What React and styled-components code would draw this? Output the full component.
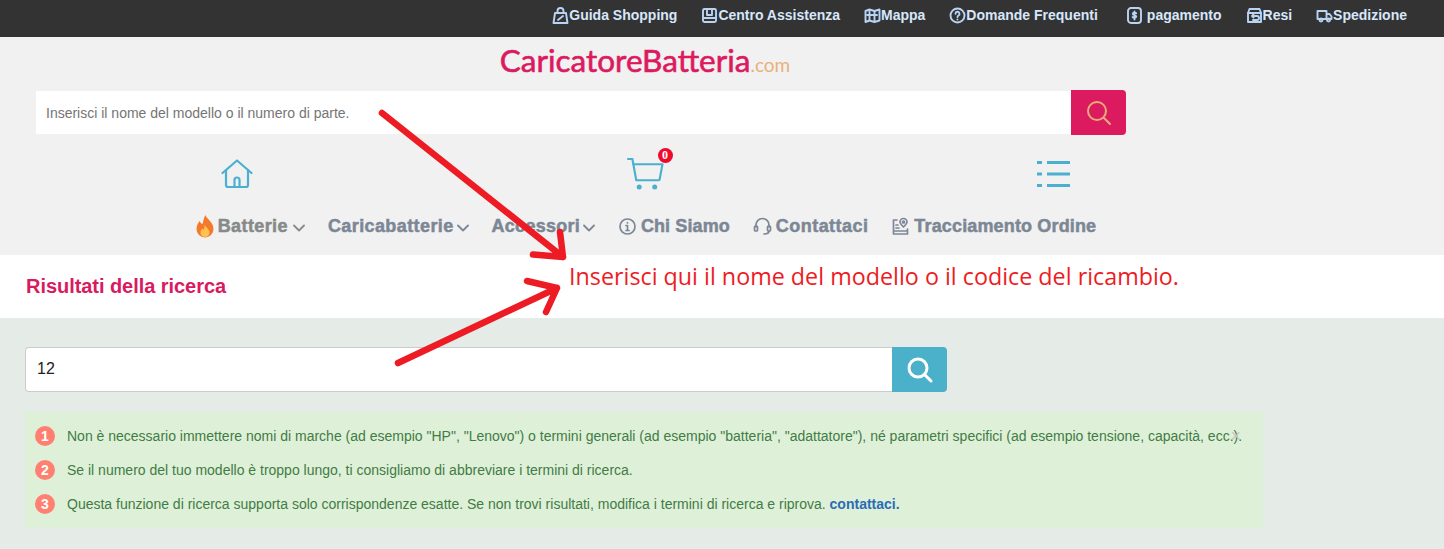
import React from "react";
import styled, { createGlobalStyle } from "styled-components";

const GlobalStyle = createGlobalStyle`
  html, body { margin: 0; padding: 0; }
  body { font-family: "Liberation Sans", Arial, sans-serif; background: #e5ebe7; overflow: hidden; }
  * { box-sizing: border-box; }
`;

const Page = styled.div`
  position: relative;
  width: 1444px;
  height: 549px;
  overflow: hidden;
`;

const TopBar = styled.div`
  height: 37px;
  background: #333;
  display: flex;
  justify-content: flex-end;
  align-items: center;
  padding: 0 37px 7px 0;
  gap: 24px;
`;

const TopLink = styled.a`
  display: flex;
  align-items: center;
  gap: ${(p) => p.$gap || 0}px;
  margin-left: ${(p) => p.$offset || 0}px;
  color: #d7e7fb;
  font-size: 14px;
  font-weight: bold;
  svg { width: 17px; height: 17px; fill: none; stroke: #b9d3f3; stroke-width: 1.9; stroke-linejoin: round; stroke-linecap: round; flex: none; }
`;

const Header = styled.header`
  height: 218px;
  background: #f1f1f1;
`;

const HeaderInner = styled.div`
  width: 1224px;
  margin-left: 33px;
  display: flex;
  flex-direction: column;
`;

const Logo = styled.div`
  height: 54px;
  padding-top: 3px;
  text-align: center;
  font-family: Lato, sans-serif;
  font-size: 31.5px;
  font-weight: 400;
  color: #dc1a60;
  line-height: 40px;
  -webkit-text-stroke: 0.6px #dc1a60;
  span { font-size: 19px; color: #e8b27c; -webkit-text-stroke: 0; }
`;

const HeadSearch = styled.form`
  display: flex;
  align-items: center;
  width: 1090px;
  margin-left: 3px;
  height: 45px;
  margin-top: -1px;
`;

const HeadInput = styled.input`
  flex: 1;
  height: 43px;
  border: 0;
  outline: 0;
  background: #fff;
  padding: 0 10px;
  font-family: inherit;
  font-size: 14px;
  &::placeholder { color: #757575; opacity: 1; }
`;

const HeadButton = styled.button`
  width: 55px;
  height: 45px;
  border: 0;
  padding: 0;
  background: #dc1a60;
  border-radius: 0 4px 4px 0;
  display: flex;
  align-items: center;
  justify-content: center;
`;

const IconRow = styled.div`
  display: grid;
  grid-template-columns: repeat(3, 1fr);
  height: 54px;
  margin-top: 12px;
`;

const IconCell = styled.div`
  display: flex;
  align-items: center;
  justify-content: center;
  svg { fill: none; stroke: #4bb0cf; stroke-width: 2.2; stroke-linecap: round; stroke-linejoin: round; }
`;

const CartWrap = styled.div`
  position: relative;
  display: flex;
`;

const CartBadge = styled.span`
  position: absolute;
  top: -10px;
  right: -9px;
  width: 15px;
  height: 15px;
  border-radius: 50%;
  background: #ef0a2d;
  color: #fff;
  font-family: "Liberation Serif", serif;
  font-size: 12px;
  font-weight: bold;
  line-height: 15px;
  text-align: center;
`;

const Nav = styled.nav`
  display: flex;
  justify-content: center;
  align-items: center;
  height: 30px;
  margin-top: 10px;
  gap: 23px;
`;

const NavItem = styled.a`
  display: flex;
  align-items: center;
  gap: ${(p) => p.$gap ?? 4}px;
  color: ${(p) => p.$color || "#7c8795"};
  font-size: 18px;
  font-weight: bold;
  letter-spacing: ${(p) => p.$spacing ?? 0.25}px;
  -webkit-text-stroke: 0.5px currentColor;
  svg { flex: none; -webkit-text-stroke: 0; }
`;

const Chevron = styled.svg`
  width: 12px;
  height: 8px;
  margin-left: 3px;
  margin-top: 3px;
  fill: none;
  stroke: currentColor;
  stroke-width: 1.8;
  stroke-linecap: round;
  stroke-linejoin: round;
`;

const NavIcon = styled.svg`
  width: 19px;
  height: 19px;
  fill: none;
  stroke: #7c8795;
  stroke-width: 1.7;
  stroke-linecap: round;
  stroke-linejoin: round;
`;

const TitleBar = styled.div`
  height: 63px;
  background: #fff;
  display: flex;
  align-items: center;
  padding: 0 26px;
`;

const Title = styled.h2`
  margin: 0;
  color: #d81b60;
  font-size: 20px;
  font-weight: bold;
  letter-spacing: -0.05px;
`;

const Body = styled.main`
  padding: 29px 25px 0;
  background: #e5ebe7;
  height: 231px;
`;

const SearchRow = styled.form`
  display: flex;
  width: 922px;
  height: 45px;
`;

const SearchInput = styled.input`
  flex: 1;
  border: 1px solid #ccc;
  border-right: 0;
  border-radius: 4px 0 0 4px;
  outline: 0;
  background: #fff;
  padding: 0 11px 2px;
  font-family: inherit;
  font-size: 16px;
  color: #222;
`;

const SearchButton = styled.button`
  width: 55px;
  border: 0;
  padding: 0;
  background: #4bb0c9;
  border-radius: 0 4px 4px 0;
  display: flex;
  align-items: center;
  justify-content: center;
`;

const Alert = styled.div`
  position: relative;
  width: 1238px;
  height: 116px;
  margin-top: 20px;
  padding: 7px 10px;
  background: #dff0d8;
  color: #417c45;
  font-size: 14px;
`;

const AlertRow = styled.div`
  display: flex;
  align-items: center;
  height: 34px;
  gap: 12px;
`;

const Num = styled.span`
  width: 20px;
  height: 20px;
  border-radius: 50%;
  background: #ff8070;
  color: #fff;
  font-size: 14px;
  font-weight: bold;
  line-height: 20px;
  text-align: center;
  flex: none;
`;

const AlertLink = styled.a`
  color: #2a6db5;
  font-weight: bold;
`;

const Close = styled.span`
  position: absolute;
  top: 14px;
  right: 22px;
  color: #c4c4c4;
  font-size: 18px;
  line-height: 20px;
`;

const Annotation = styled.svg`
  position: absolute;
  inset: 0;
  width: 1444px;
  height: 549px;
  pointer-events: none;
  fill: none;
  stroke: #ed1c24;
  stroke-width: 6.5;
  stroke-linecap: round;
  stroke-linejoin: round;
`;

const AnnotationText = styled.div`
  position: absolute;
  left: 569px;
  top: 260px;
  color: #ed1c24;
  font-family: "Open Sans", sans-serif;
  font-size: 23.3px;
  line-height: 32px;
  white-space: nowrap;
`;

const topLinks = [
  { label: "Guida Shopping", icon: <><path d="M3 6h11l1.500 10h-14z" /><path d="M5.500 6V4a3 3 0 0 1 6 0v2" /><path d="M6 13l5-4" /></> },
  { label: "Centro Assistenza", icon: <><rect x="2" y="2" width="13" height="13" rx="1.500" /><path d="M6 2v6h5V2M2 11h13" /></> },
  { label: "Mappa", icon: <><path d="M1.500 4l4-1.500 5 1.500 5-1.500v11l-5 1.500-5-1.500-4 1.500z" /><path d="M5.500 3v10M10.500 4v10M3 8h10" /></> },
  { label: "Domande Frequenti", icon: <><circle cx="8.500" cy="8.500" r="7" /><path d="M6.500 6.800a2 2 0 1 1 3 1.700c-.7.4-1 .8-1 1.500M8.500 12.500v.1" /></> },
  { label: "pagamento", gap: 4, offset: 4, icon: <><rect x="2" y="1" width="13" height="15" rx="3" /><path d="M10.200 6.300c-.4-.8-3.400-1-3.400.6 0 1.700 3.400.8 3.400 2.700 0 1.500-3 1.400-3.500.4M8.500 4.500v8" /></> },
  { label: "Resi", icon: <><path d="M2 6l1.500-4h10L15 6v9H2z" /><path d="M2 6h13" /><path d="M6 9h5a2 2 0 0 1 0 4H7M6 9l1.500-1.500M6 9l1.500 1.500" /></> },
  { label: "Spedizione", icon: <><path d="M1.500 4h9v8h-9zM10.500 7h3l2 2.500V12h-5z" /><circle cx="5" cy="13" r="1.500" /><circle cx="12.500" cy="13" r="1.500" /></> },
];

const SearchGlass = ({ size, color, width }) => (
  <svg width={size} height={size} viewBox="0 0 26 26" fill="none" stroke={color} strokeWidth={width} strokeLinecap="round">
    <circle cx="11" cy="11" r="9" />
    <path d="M18 18l6 6" />
  </svg>
);

const ChevronDown = () => (
  <Chevron viewBox="0 0 12 8"><path d="M1 1.500l5 5 5-5" /></Chevron>
);

export default function App() {
  return (
    <Page>
      <GlobalStyle />
      <TopBar>
        {topLinks.map((l) => (
          <TopLink key={l.label} $gap={l.gap} $offset={l.offset}>
            <svg viewBox="0 0 17 17">{l.icon}</svg>
            {l.label}
          </TopLink>
        ))}
      </TopBar>

      <Header>
        <HeaderInner>
          <Logo>CaricatoreBatteria<span>.com</span></Logo>
          <HeadSearch>
            <HeadInput placeholder="Inserisci il nome del modello o il numero di parte." />
            <HeadButton type="button"><SearchGlass size={26} color="#e8ad7a" width={2} /></HeadButton>
          </HeadSearch>
          <IconRow>
            <IconCell>
              <svg width="32" height="30" viewBox="0 0 32 30">
                <path d="M1.500 14L16 1.500 30.500 14" />
                <path d="M5 11v15a2 2 0 0 0 2 2h18a2 2 0 0 0 2-2V11" />
                <path d="M13.500 28v-7a2.500 2.500 0 0 1 5 0v7" />
              </svg>
            </IconCell>
            <IconCell>
              <CartWrap>
                <svg width="37" height="32" viewBox="0 0 38 33">
                  <path d="M1 1h4.500l4 22h23" />
                  <path d="M6.500 6.500h30l-3 16" />
                  <circle cx="12.500" cy="30" r="1.500" fill="#4bb0cf" />
                  <circle cx="28.500" cy="30" r="1.500" fill="#4bb0cf" />
                </svg>
                <CartBadge>0</CartBadge>
              </CartWrap>
            </IconCell>
            <IconCell>
              <svg width="34" height="28" viewBox="0 0 34 28" style={{ strokeWidth: 3, strokeLinecap: "butt" }}>
                <path d="M1 2.500h5M11 2.500h23M1 14h5M11 14h23M1 25.500h5M11 25.500h23" />
              </svg>
            </IconCell>
          </IconRow>
          <Nav>
            <NavItem $gap={2} $color="#868a88" $spacing={0.4}>
              <svg width="22" height="24" viewBox="2.500 0 18 24">
                <path d="M12 1c1 4 8 7 8 14a8.500 8.500 0 0 1-17 0c0-4 2-6 3-8 1 2 2 3 3 3 1-3 1-6 3-9z" fill="#f4792b" />
                <path d="M11.500 11c1 3 4.500 4 4.500 7.500a4.500 4.500 0 0 1-9 0c0-2 1-3 2-4 .5 1 1 1 1.500 1 .5-1.500 0-3 1-4.500z" fill="#fdc24f" />
              </svg>
              Batterie<ChevronDown />
            </NavItem>
            <NavItem $gap={0} $spacing={0.4}>Caricabatterie<ChevronDown /></NavItem>
            <NavItem $gap={0}>Accessori<ChevronDown /></NavItem>
            <NavItem $spacing={0.1}>
              <NavIcon viewBox="0 0 19 19"><circle cx="9.500" cy="9.500" r="7.500" /><path d="M9.500 8.500v5M8 8.500h1.500M8 13.500h3M9.500 5.500v.5" /></NavIcon>
              Chi Siamo
            </NavItem>
            <NavItem $spacing={0.45}>
              <NavIcon viewBox="0 0 19 19"><path d="M3 10V8a6.500 6.500 0 0 1 13 0v2" /><rect x="1.500" y="9" width="3" height="5" rx="1" /><rect x="14.500" y="9" width="3" height="5" rx="1" /><path d="M16 14c0 2-2 3-5 3" /></NavIcon>
              Contattaci
            </NavItem>
            <NavItem $spacing={0.15}>
              <NavIcon viewBox="0 0 19 19"><path d="M6 3H2.500v14h14v-5M2.500 14h14M5 11h3M5 8h2" /><path d="M12.500 10c-2-2-3.500-3.500-3.500-5a3.500 3.500 0 0 1 7 0c0 1.500-1.500 3-3.500 5z" /><circle cx="12.500" cy="5" r="1" /></NavIcon>
              Tracciamento Ordine
            </NavItem>
          </Nav>
        </HeaderInner>
      </Header>

      <TitleBar><Title>Risultati della ricerca</Title></TitleBar>

      <Body>
        <SearchRow>
          <SearchInput defaultValue="12" />
          <SearchButton type="button"><SearchGlass size={26} color="#fff" width={3} /></SearchButton>
        </SearchRow>
        <Alert>
          <AlertRow>
            <Num>1</Num>
            Non è necessario immettere nomi di marche (ad esempio "HP", "Lenovo") o termini generali (ad esempio "batteria", "adattatore"), né parametri specifici (ad esempio tensione, capacità, ecc.).
          </AlertRow>
          <AlertRow>
            <Num>2</Num>
            Se il numero del tuo modello è troppo lungo, ti consigliamo di abbreviare i termini di ricerca.
          </AlertRow>
          <AlertRow>
            <Num>3</Num>
            <span>Questa funzione di ricerca supporta solo corrispondenze esatte. Se non trovi risultati, modifica i termini di ricerca e riprova. <AlertLink>contattaci.</AlertLink></span>
          </AlertRow>
          <Close>×</Close>
        </Alert>
      </Body>

      <Annotation viewBox="0 0 1444 549">
        <path d="M382 113L563 257M533 254.500L563 257L560 232" />
        <path d="M398 363L557 288M527 281L557 288L546 312" />
      </Annotation>
      <AnnotationText>Inserisci qui il nome del modello o il codice del ricambio.</AnnotationText>
    </Page>
  );
}
